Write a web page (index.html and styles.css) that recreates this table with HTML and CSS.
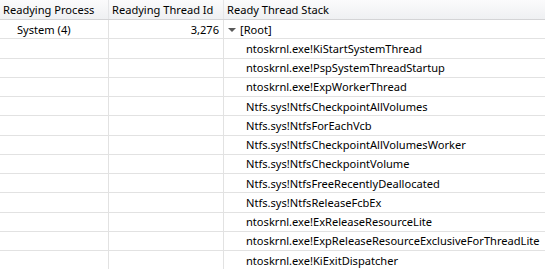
FILE: index.html
```html
<!DOCTYPE html>
<html>
<head>
<meta charset="utf-8">
<link rel="stylesheet" href="styles.css">
</head>
<body>
<div class="grid">
  <div class="row head">
    <div class="cell">Readying Process</div>
    <div class="cell">Readying Thread Id</div>
    <div class="cell">Ready Thread Stack</div>
  </div>
  <div class="row">
    <div class="cell proc">System (4)</div>
    <div class="cell num">3,276</div>
    <div class="cell root"><span class="tri"></span>[Root]</div>
  </div>
  <div class="row"><div class="cell"></div><div class="cell"></div><div class="cell frame">ntoskrnl.exe!KiStartSystemThread</div></div>
  <div class="row"><div class="cell"></div><div class="cell"></div><div class="cell frame">ntoskrnl.exe!PspSystemThreadStartup</div></div>
  <div class="row"><div class="cell"></div><div class="cell"></div><div class="cell frame">ntoskrnl.exe!ExpWorkerThread</div></div>
  <div class="row"><div class="cell"></div><div class="cell"></div><div class="cell frame">Ntfs.sys!NtfsCheckpointAllVolumes</div></div>
  <div class="row"><div class="cell"></div><div class="cell"></div><div class="cell frame">Ntfs.sys!NtfsForEachVcb</div></div>
  <div class="row"><div class="cell"></div><div class="cell"></div><div class="cell frame">Ntfs.sys!NtfsCheckpointAllVolumesWorker</div></div>
  <div class="row"><div class="cell"></div><div class="cell"></div><div class="cell frame">Ntfs.sys!NtfsCheckpointVolume</div></div>
  <div class="row"><div class="cell"></div><div class="cell"></div><div class="cell frame">Ntfs.sys!NtfsFreeRecentlyDeallocated</div></div>
  <div class="row"><div class="cell"></div><div class="cell"></div><div class="cell frame">Ntfs.sys!NtfsReleaseFcbEx</div></div>
  <div class="row"><div class="cell"></div><div class="cell"></div><div class="cell frame">ntoskrnl.exe!ExReleaseResourceLite</div></div>
  <div class="row"><div class="cell"></div><div class="cell"></div><div class="cell frame">ntoskrnl.exe!ExpReleaseResourceExclusiveForThreadLite</div></div>
  <div class="row last"><div class="cell"></div><div class="cell"></div><div class="cell frame">ntoskrnl.exe!KiExitDispatcher</div></div>
</div>
</body>
</html>
```
FILE: styles.css
```css
html, body {
  margin: 0;
  padding: 0;
  background: #ffffff;
  overflow: hidden;
}
body {
  font-family: "Noto Sans", "Open Sans", sans-serif;
  font-size: 11.1px;
  color: #000000;
  width: 545px;
  height: 269px;
}
.grid {
  display: flex;
  flex-direction: column;
  height: 269px;
}
.row {
  display: grid;
  grid-template-columns: 109px 115px 1fr;
  height: 19.25px;
  flex: none;
  box-sizing: border-box;
  border-bottom: 1px solid #e2e2e2;
}
.row.head {
  height: 20px;
  background: linear-gradient(#fbfbfc, #eff0f2);
  border-bottom: 1px solid #d4d4d6;
}
.row.last {
  flex: 1;
  border-bottom: none;
}
.row.last .cell {
  align-items: flex-start;
  padding-top: 2px;
}
.cell {
  box-sizing: border-box;
  border-right: 1px solid #e2e2e2;
  padding: 1px 3px 0;
  display: flex;
  align-items: center;
  white-space: nowrap;
  overflow: hidden;
  line-height: 16px;
}
.cell:last-child {
  border-right: none;
}
.head .cell {
  border-right-color: #e4e5e7;
}
.proc {
  padding-left: 17px;
}
.num {
  justify-content: flex-end;
  padding-right: 4px;
}
.root {
  padding-left: 4px;
}
.tri {
  width: 0;
  height: 0;
  border-left: 4px solid transparent;
  border-right: 4px solid transparent;
  border-top: 4px solid #595959;
  margin-right: 4px;
}
.frame {
  padding-left: 22px;
}
.row.last .cell.frame {
  padding-left: 22px;
}
```
